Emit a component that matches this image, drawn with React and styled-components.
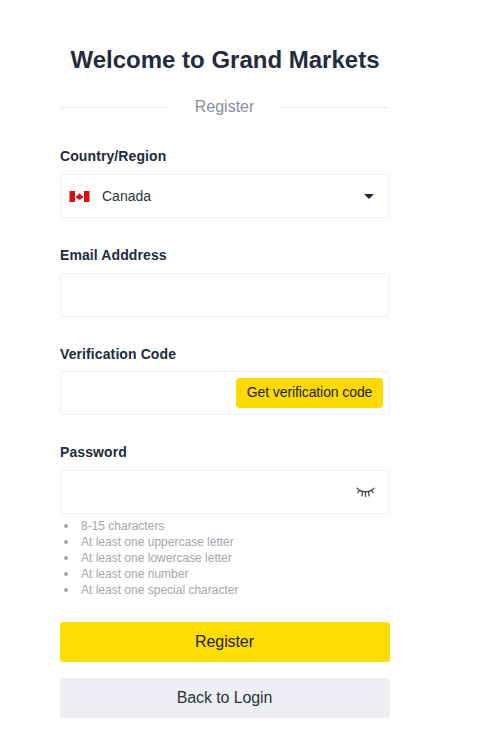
import React from "react";
import styled, { createGlobalStyle } from "styled-components";

const Global = createGlobalStyle`
  html, body { margin: 0; padding: 0; background: #fff; }
  body { font-family: "Liberation Sans", Arial, sans-serif; color: #1e2a3a; }
`;

const Page = styled.div`
  width: 330px;
  margin-left: 60px;
  padding-top: 44px;
  display: flex;
  flex-direction: column;
`;

const Title = styled.h1`
  margin: 0;
  height: 32px;
  line-height: 32px;
  font-size: 24px;
  font-weight: 700;
  text-align: center;
  color: #222c3c;
  white-space: nowrap;
`;

const Divider = styled.div`
  display: flex;
  align-items: center;
  gap: 26px;
  margin-top: 15px;
  height: 32px;
  width: 329px;
  color: #8a8f96;
  font-size: 16px;
  &::before, &::after {
    content: "";
    flex: 1;
    height: 1px;
    background: #eaecef;
  }
`;

const Field = styled.div`
  display: flex;
  flex-direction: column;
  margin-top: ${p => p.$top}px;
`;

const Label = styled.label`
  font-size: 14px;
  font-weight: 700;
  line-height: 20px;
  letter-spacing: 0.1px;
  color: #222c3c;
  margin-bottom: ${p => p.$gap || 8}px;
`;

const Box = styled.div`
  height: 44px;
  box-sizing: border-box;
  border: 1px solid #f0f1f3;
  border-radius: 3px;
  display: flex;
  align-items: center;
  background: #fff;
  padding: 0 6px 0 8px;
`;

const Value = styled.span`
  font-size: 14px;
  color: #2b3440;
  margin-left: 12px;
  flex: 1;
`;

const Caret = styled.span`
  width: 0;
  height: 0;
  border-left: 5px solid transparent;
  border-right: 5px solid transparent;
  border-top: 5px solid #1e2a3a;
  margin-right: 9px;
`;

const CodeButton = styled.button`
  margin-left: auto;
  height: 30px;
  width: 147px;
  border: 0;
  border-radius: 4px;
  background: #fcd900;
  color: #1e2329;
  font-family: inherit;
  font-size: 14px;
  letter-spacing: -0.1px;
  padding: 0 0 2px;
`;

const EyeWrap = styled.span`
  margin-left: auto;
  margin-right: 8px;
  display: flex;
`;

const Rules = styled.ul`
  margin: 4px 0 0;
  padding: 0 0 0 4px;
  list-style: none;
  color: #a3a6ab;
  font-size: 12px;
  line-height: 16px;
`;

const Rule = styled.li`
  display: flex;
  align-items: center;
  gap: 13px;
  &::before {
    content: "";
    width: 4px;
    height: 4px;
    border-radius: 50%;
    background: #a3a6ab;
  }
`;

const Action = styled.button`
  display: block;
  width: 330px;
  height: 40px;
  border: 0;
  border-radius: 3px;
  font-family: inherit;
  font-size: 16px;
  letter-spacing: -0.1px;
  padding: 0 1px 0 0;
  margin-top: ${p => p.$top}px;
  background: ${p => (p.$primary ? "#ffdd00" : "#eeeff2")};
  color: ${p => (p.$primary ? "#1e2329" : "#2b3440")};
`;

const Flag = () => (
  <svg width="21" height="11" viewBox="0 0 21 11" aria-hidden="true">
    <rect x="0.5" width="5.5" height="11" fill="#d80f14" />
    <rect x="15" width="5.5" height="11" fill="#d80f14" />
    <path
      d="M10.5 2l.8 1.5.8-.4-.3 2 1-.8.3.7 1.1-.2-.3 1.1.4.3-2 1.5.2.7-1.8-.2v1.1h-.4V8.2l-1.8.2.2-.7-2-1.5.4-.3-.3-1.1 1.1.2.3-.7 1 .8-.3-2 .8.4z"
      fill="#d80f14"
    />
  </svg>
);

const ClosedEye = () => (
  <svg width="19" height="11" viewBox="0 0 19 11" fill="none" stroke="#45484d" strokeWidth="1.3" strokeLinecap="round" strokeLinejoin="round" aria-hidden="true">
    <path d="M3.5 3.4C7 5.2 12 5.2 15.5 3.4" />
    <path d="M1.2 1.2L3.5 3.4L1.8 5.6M17.8 1.2L15.5 3.4L17.2 5.6M6.4 4.8L6 8.8M9.5 5.2V9.4M12.6 4.8L13 8.8" />
  </svg>
);

const rules = [
  "8-15 characters",
  "At least one uppercase letter",
  "At least one lowercase letter",
  "At least one number",
  "At least one special character",
];

export default function App() {
  return (
    <>
      <Global />
      <Page>
        <Title>Welcome to Grand Markets</Title>
        <Divider>Register</Divider>
        <Field $top={23}>
          <Label>Country/Region</Label>
          <Box>
            <Flag />
            <Value>Canada</Value>
            <Caret />
          </Box>
        </Field>
        <Field $top={27}>
          <Label>Email Adddress</Label>
          <Box />
        </Field>
        <Field $top={27}>
          <Label $gap={7}>Verification Code</Label>
          <Box>
            <CodeButton>Get verification code</CodeButton>
          </Box>
        </Field>
        <Field $top={27}>
          <Label>Password</Label>
          <Box>
            <EyeWrap><ClosedEye /></EyeWrap>
          </Box>
        </Field>
        <Rules>
          {rules.map(text => <Rule key={text}>{text}</Rule>)}
        </Rules>
        <Action $primary $top={24}>Register</Action>
        <Action $top={16}>Back to Login</Action>
      </Page>
    </>
  );
}
